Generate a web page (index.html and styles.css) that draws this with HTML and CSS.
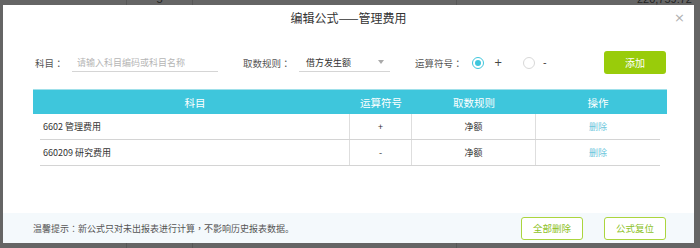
FILE: index.html
```html
<!DOCTYPE html>
<html>
<head>
<meta charset="utf-8">
<title>编辑公式</title>
<link rel="stylesheet" href="styles.css">
</head>
<body>
<div class="sheet">
  <div class="col c1"></div>
  <div class="col c2"><span class="cell">5</span></div>
  <div class="col c3"></div>
  <div class="col c4"><span class="cell num">220,759.72</span></div>
</div>

<div class="modal">
  <div class="modal-head">编辑公式——管理费用<span class="close">×</span></div>

  <div class="form-row">
    <span class="lbl lbl-subject">科目<span class="colon">：</span></span>
    <input class="txt" type="text" placeholder="请输入科目编码或科目名称">
    <span class="lbl lbl-rule">取数规则<span class="colon">：</span></span>
    <div class="sel">借方发生额<span class="arrow"></span></div>
    <span class="lbl lbl-op">运算符号<span class="colon">：</span></span>
    <span class="radio on"></span><span class="radio-txt plus">+</span>
    <span class="radio"></span><span class="radio-txt">-</span>
    <button type="button" class="btn-add">添加</button>
  </div>

  <div class="grid">
    <div class="thead">
      <div>科目</div>
      <div>运算符号</div>
      <div>取数规则</div>
      <div>操作</div>
    </div>
    <div class="trow">
      <div class="td first">6602 管理费用</div>
      <div class="td">+</div>
      <div class="td">净额</div>
      <div class="td last"><a class="del">删除</a></div>
    </div>
    <div class="trow">
      <div class="td first">660209 研究费用</div>
      <div class="td">-</div>
      <div class="td">净额</div>
      <div class="td last"><a class="del">删除</a></div>
    </div>
  </div>

  <div class="modal-foot">
    <span class="tip">温馨提示<span class="colon">：</span>新公式只对未出报表进行计算<span class="colon">，</span>不影响历史报表数据。</span>
    <button type="button" class="btn-line">全部删除</button>
    <button type="button" class="btn-line">公式复位</button>
  </div>
</div>
</body>
</html>
```

FILE: styles.css
```css
body {
  margin: 0;
  width: 700px;
  height: 248px;
  overflow: hidden;
  position: relative;
  background: #656565;
  font-family: "Noto Sans CJK SC", "DejaVu Sans", sans-serif;
}

/* page behind the dialog */
.sheet {
  display: flex;
  height: 248px;
}
.sheet .col {
  border-right: 1px solid #575757;
  box-sizing: border-box;
  display: flex;
  align-items: flex-start;
}
.c1 { width: 127px; }
.c2 { width: 66px; justify-content: center; }
.c3 { width: 264px; }
.c4 { flex: 1; justify-content: flex-end; border-right: none !important; }
.cell {
  font-family: "Liberation Sans", sans-serif;
  font-size: 11px;
  line-height: 11px;
  margin-top: -6px;
  color: #222;
}
.num { padding-right: 8px; }

/* dialog */
.modal {
  position: absolute;
  left: 3px;
  top: 5px;
  width: 691px;
  height: 238px;
  background: #fff;
  display: flex;
  flex-direction: column;
}
.modal-head {
  position: relative;
  height: 26px;
  line-height: 26px;
  text-align: center;
  font-size: 12px;
  color: #333;
}
.close {
  position: absolute;
  right: 9px;
  top: 0;
  font-family: "DejaVu Sans", sans-serif;
  font-size: 13px;
  color: #b0b0b0;
}

/* centred full-width punctuation */
.colon { font-family: "Noto Sans CJK TC", "Noto Sans CJK SC", sans-serif; }

.form-row {
  margin-top: 20px;
  height: 23px;
  display: flex;
  align-items: center;
  padding: 0 28px 0 32px;
  font-size: 9.5px;
  color: #555;
}
.lbl { white-space: nowrap; }
.lbl-subject { width: 37px; }
.lbl-rule { width: 56px; margin-left: 25px; }
.lbl-op { width: 57px; margin-left: 25px; }
.txt {
  width: 146px;
  height: 18px;
  box-sizing: border-box;
  border: none;
  border-bottom: 1px solid #d5d5d5;
  padding: 0 0 0 5px;
  font-family: inherit;
  font-size: 9px;
  color: #333;
  outline: none;
}
.txt::placeholder { color: #b5b5b5; }
.sel {
  position: relative;
  width: 91px;
  height: 18px;
  line-height: 17px;
  box-sizing: border-box;
  border-bottom: 1px solid #d5d5d5;
  padding-left: 7px;
  font-size: 9px;
  color: #333;
}
.arrow {
  position: absolute;
  right: 6px;
  top: 6px;
  border-left: 3px solid transparent;
  border-right: 3px solid transparent;
  border-top: 4px solid #aaa;
}
.radio {
  width: 12px;
  height: 12px;
  box-sizing: border-box;
  border: 1px solid #d8d8d8;
  border-radius: 50%;
  position: relative;
}
.radio.on { border-color: #3ec6dc; }
.radio.on::after {
  content: "";
  position: absolute;
  left: 2px;
  top: 2px;
  width: 6px;
  height: 6px;
  border-radius: 50%;
  background: #3ec6dc;
}
.radio-txt {
  margin-left: 8px;
  font-family: "DejaVu Sans", sans-serif;
  font-size: 10px;
  color: #444;
}
.radio-txt.plus { width: 29px; margin-left: 10px; }
.btn-add {
  margin-left: auto;
  width: 62px;
  height: 23px;
  border: none;
  border-radius: 3px;
  background: #99cc0a;
  color: #fff;
  font-family: inherit;
  font-size: 10px;
}

/* formula list */
.grid {
  margin: 15px 30px 0;
  width: 634px;
}
.thead {
  display: grid;
  grid-template-columns: 310px 62px 124px 124px;
  padding: 0 7px;
  height: 25px;
  align-items: center;
  text-align: center;
  background: #3ec6dc;
  border-top: 1px solid #9fe0ea;
  box-sizing: border-box;
  color: #fff;
  font-size: 10.5px;
}
.trow {
  display: grid;
  grid-template-columns: 310px 62px 124px 124px;
  margin: 0 7px;
  height: 25px;
  border-bottom: 1px solid #d4d4d4;
  font-size: 9px;
  color: #333;
}
.td {
  display: flex;
  align-items: center;
  justify-content: center;
  border-right: 1px solid #dedede;
}
.td.first { justify-content: flex-start; padding-left: 3px; }
.td.last { border-right: none; }
.del { color: #6cc6dc; }

.modal-foot {
  margin-top: auto;
  height: 30px;
  display: flex;
  align-items: center;
  padding: 0 28px 0 30px;
  background: #f4f9fc;
  font-size: 9px;
  color: #555;
}
.tip { flex: 1; }
.btn-line {
  width: 62px;
  height: 23px;
  margin-left: 21px;
  border: 1px solid #abd53e;
  border-radius: 3px;
  background: #fff;
  color: #8dc21f;
  font-family: inherit;
  font-size: 9.5px;
}
```
